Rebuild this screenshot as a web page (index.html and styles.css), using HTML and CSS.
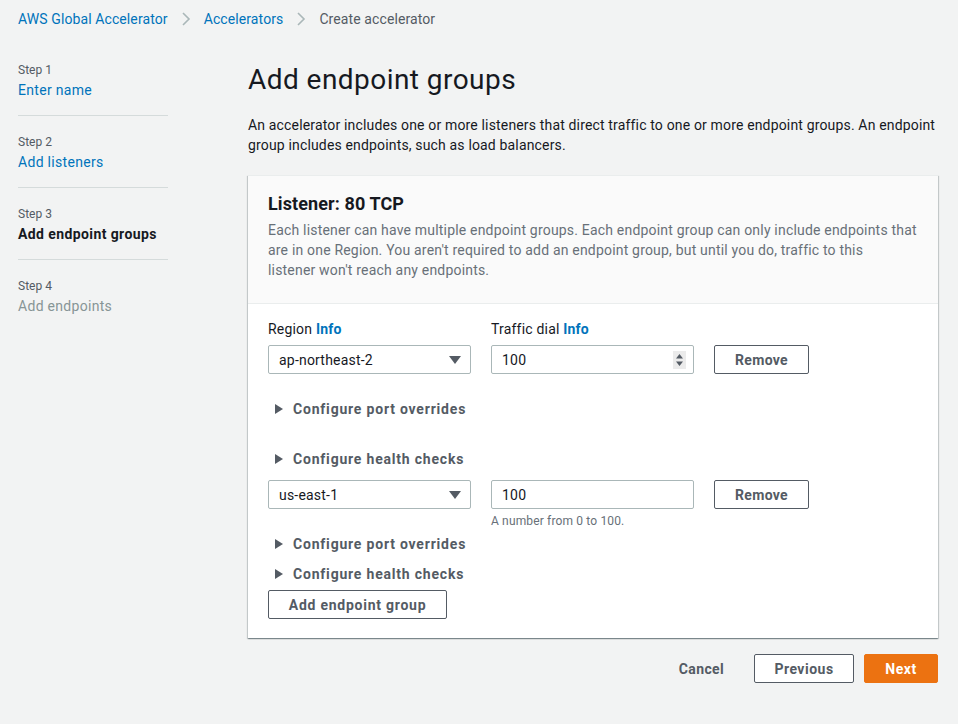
FILE: index.html
```html
<!DOCTYPE html>
<html lang="en">
<head>
<meta charset="utf-8">
<title>Create accelerator</title>
<link rel="stylesheet" href="styles.css">
</head>
<body>
<nav class="breadcrumbs">
  <a class="crumb-link" href="#">AWS Global Accelerator</a>
  <svg class="crumb-sep" width="12" height="16" viewBox="0 0 12 16"><path d="M3 2 L9 8 L3 14" fill="none" stroke="#aab7b8" stroke-width="1.6"/></svg>
  <a class="crumb-link" href="#">Accelerators</a>
  <svg class="crumb-sep" width="12" height="16" viewBox="0 0 12 16"><path d="M3 2 L9 8 L3 14" fill="none" stroke="#aab7b8" stroke-width="1.6"/></svg>
  <span class="crumb-current">Create accelerator</span>
</nav>
<div class="layout">
  <ol class="steps">
    <li class="step">
      <div class="step-label">Step 1</div>
      <a class="step-name link" href="#">Enter name</a>
    </li>
    <li class="step">
      <div class="step-label">Step 2</div>
      <a class="step-name link" href="#">Add listeners</a>
    </li>
    <li class="step">
      <div class="step-label">Step 3</div>
      <div class="step-name current">Add endpoint groups</div>
    </li>
    <li class="step">
      <div class="step-label">Step 4</div>
      <div class="step-name disabled">Add endpoints</div>
    </li>
  </ol>
  <main class="main">
    <h1 class="title">Add endpoint groups</h1>
    <p class="intro">An accelerator includes one or more listeners that direct traffic to one or more endpoint groups. An endpoint group includes endpoints, such as load balancers.</p>
    <section class="card">
      <header class="card-header">
        <h2 class="card-title">Listener: 80 TCP</h2>
        <p class="card-desc">Each listener can have multiple endpoint groups. Each endpoint group can only include endpoints that<br>are in one Region. You aren't required to add an endpoint group, but until you do, traffic to this<br>listener won't reach any endpoints.</p>
      </header>
      <div class="card-body">
        <div class="labels">
          <div class="field-label">Region <a class="info" href="#">Info</a></div>
          <div class="field-label">Traffic dial <a class="info" href="#">Info</a></div>
        </div>
        <div class="row">
          <div class="select">
            <span>ap-northeast-2</span>
            <svg width="12" height="8" viewBox="0 0 12 8"><path d="M0 0 H12 L6 8 Z" fill="#545b64"/></svg>
          </div>
          <div class="input">
            <span>100</span>
            <span class="spinner"><svg width="9" height="14" viewBox="0 0 9 14"><path d="M4.5 1 L8 5.5 H1 Z M1 8.5 H8 L4.5 13 Z" fill="#545b64"/></svg></span>
          </div>
          <button class="btn" type="button">Remove</button>
        </div>
        <div class="expander first"><svg width="8" height="10" viewBox="0 0 8 10"><path d="M0 0 L8 5 L0 10 Z" fill="#545b64"/></svg>Configure port overrides</div>
        <div class="expander gap30"><svg width="8" height="10" viewBox="0 0 8 10"><path d="M0 0 L8 5 L0 10 Z" fill="#545b64"/></svg>Configure health checks</div>
        <div class="row row2">
          <div class="select">
            <span>us-east-1</span>
            <svg width="12" height="8" viewBox="0 0 12 8"><path d="M0 0 H12 L6 8 Z" fill="#545b64"/></svg>
          </div>
          <div class="input-wrap">
            <div class="input"><span>100</span></div>
            <div class="hint">A number from 0 to 100.</div>
          </div>
          <button class="btn" type="button">Remove</button>
        </div>
        <div class="expander gap5"><svg width="8" height="10" viewBox="0 0 8 10"><path d="M0 0 L8 5 L0 10 Z" fill="#545b64"/></svg>Configure port overrides</div>
        <div class="expander gap10"><svg width="8" height="10" viewBox="0 0 8 10"><path d="M0 0 L8 5 L0 10 Z" fill="#545b64"/></svg>Configure health checks</div>
        <button class="btn add-btn" type="button">Add endpoint group</button>
      </div>
    </section>
    <div class="actions">
      <button class="btn-link" type="button">Cancel</button>
      <button class="btn prev-btn" type="button">Previous</button>
      <button class="btn primary" type="button">Next</button>
    </div>
  </main>
</div>
</body>
</html>
```
FILE: styles.css
```css
* { box-sizing: border-box; }
html, body {
  margin: 0;
  background: #f2f3f3;
  font-family: Roboto, "Liberation Sans", Arial, sans-serif;
  font-size: 14px;
  line-height: 20px;
  color: #16191f;
}
a { text-decoration: none; }
.breadcrumbs {
  display: flex;
  align-items: center;
  gap: 12px;
  height: 40px;
  padding: 0 18px 2px;
  letter-spacing: 0.1px;
}
.crumb-link { color: #0073bb; }
.crumb-current { color: #545b64; }
.crumb-sep { display: block; }

.layout {
  display: grid;
  grid-template-columns: 150px 690px;
  column-gap: 80px;
  padding: 0 20px 0 18px;
}
.steps {
  list-style: none;
  margin: 0;
  padding: 4px 0 0;
}
.step {
  padding: 18px 0 15px;
  border-bottom: 1px solid #d5dbdb;
}
.step:last-child { border-bottom: none; }
.step-label {
  font-size: 12px;
  line-height: 16px;
  color: #545b64;
  margin-bottom: 2px;
}
.step-name { display: block; letter-spacing: 0.3px; }
.step-name.link { color: #0073bb; }
.step-name.current { font-weight: 700; color: #16191f; letter-spacing: 0.4px; }
.step-name.disabled { color: #879596; }

.main { padding-top: 22px; }
.title {
  margin: 0;
  font-size: 28px;
  line-height: 36px;
  font-weight: 400;
  letter-spacing: 0.45px;
}
.intro { margin: 17px 0 20px; letter-spacing: 0.16px; }

.card {
  background: #fff;
  box-shadow: 0 1px 1px 0 rgba(0,28,36,.3), 1px 1px 1px 0 rgba(0,28,36,.15), -1px 1px 1px 0 rgba(0,28,36,.15);
  border-top: 1px solid #eaeded;
}
.card-header {
  background: #fafafa;
  border-bottom: 1px solid #eaeded;
  padding: 16px 20px 23px;
}
.card-title {
  margin: 0 0 4px;
  font-size: 18px;
  line-height: 24px;
  font-weight: 700;
  letter-spacing: 0.1px;
}
.card-desc {
  margin: 0;
  color: #687078;
  white-space: nowrap;
  letter-spacing: 0.19px;
}
.card-body { padding: 15px 20px 19px; }
.labels, .row {
  display: grid;
  grid-template-columns: 203px 203px 95px;
  column-gap: 20px;
  align-items: start;
}
.labels { margin-bottom: 6px; letter-spacing: 0.2px; }
.field-label { color: #16191f; }
.info { color: #0073bb; font-weight: 700; }
.select, .input {
  height: 29px;
  border: 1px solid #aab7b8;
  border-radius: 2px;
  background: #fff;
  display: flex;
  align-items: center;
  justify-content: space-between;
  padding: 0 9px 0 10px;
  letter-spacing: 0.2px;
}
.spinner {
  display: flex;
  align-items: center;
  justify-content: center;
  width: 13px;
  height: 18px;
  background: #ebebeb;
  margin-right: -2px;
}
.spinner svg { display: block; }
.btn {
  height: 29px;
  border: 1px solid #545b64;
  border-radius: 2px;
  background: #fff;
  color: #545b64;
  font: 700 14px/20px Roboto, "Liberation Sans", Arial, sans-serif;
  letter-spacing: 0.3px;
  padding: 0 20px;
  cursor: pointer;
}
.row2 { margin-top: 11px; }
.hint {
  font-size: 12px;
  line-height: 16px;
  color: #687078;
  margin-top: 4px;
  letter-spacing: 0.15px;
}
.expander {
  display: flex;
  align-items: center;
  gap: 10px;
  padding-left: 7px;
  font-weight: 700;
  color: #545b64;
  letter-spacing: 0.8px;
}
.expander.first { margin-top: 25px; }
.expander.gap30 { margin-top: 30px; }
.expander.gap5 { margin-top: 5px; }
.expander.gap10 { margin-top: 10px; }
.add-btn { margin-top: 6px; width: 179px; padding: 0; letter-spacing: 0.75px; }

.actions {
  display: flex;
  justify-content: flex-end;
  align-items: center;
  margin-top: 16px;
}
.btn-link {
  border: none;
  background: none;
  font: 700 14px/20px Roboto, "Liberation Sans", Arial, sans-serif;
  letter-spacing: 0.35px;
  color: #545b64;
  padding: 0;
  margin-right: 30px;
}
.prev-btn { width: 100px; padding: 0; margin-right: 10px; letter-spacing: 0.5px; }
.primary {
  width: 74px;
  padding: 0;
  background: #ec7211;
  border-color: #ec7211;
  color: #fff;
  letter-spacing: 0.5px;
}
```
